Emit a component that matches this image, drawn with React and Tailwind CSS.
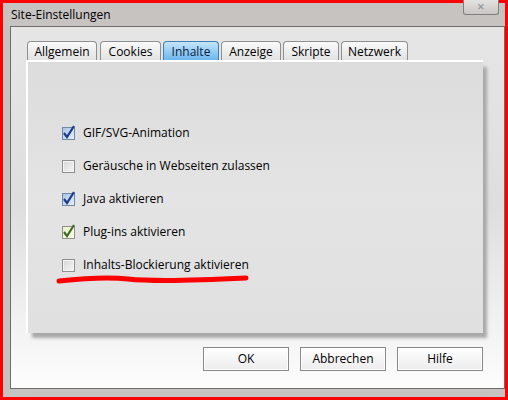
const tabs = [
    { name: "Allgemein", w: "w-[70px] mr-[1px]" },
    { name: "Cookies", w: "w-[61px]" },
    { name: "Inhalte", w: "w-[56px]" },
    { name: "Anzeige", w: "w-[60px]" },
    { name: "Skripte", w: "w-[56px]" },
    { name: "Netzwerk", w: "w-[67px]" },
];

const options = [
    { label: "GIF/SVG-Animation", state: "checked" },
    { label: "Geräusche in Webseiten zulassen", state: "off" },
    { label: "Java aktivieren", state: "checked" },
    { label: "Plug-ins aktivieren", state: "hover" },
    { label: "Inhalts-Blockierung aktivieren", state: "off" },
];

const CheckBox = ({ state }) => {
    if (state === "off") {
        return (
            <span className="w-[13px] h-[13px] border border-[#8f8f8f] bg-gradient-to-br from-[#d6d6d6] to-[#f7f7f7] shadow-[inset_0_0_0_1px_#f4f4f4]" />
        );
    }
    const green = state === "hover";
    return (
        <span
            className={
                green
                    ? "relative w-[13px] h-[13px] border border-[#8f8f8f] bg-gradient-to-br from-[#e8f1c8] to-[#fdfde8]"
                    : "relative w-[13px] h-[13px] border border-[#7088a8] bg-gradient-to-br from-[#a9c3e6] to-[#e8f0fb]"
            }
        >
            <svg width="14" height="14" viewBox="0 0 14 14" className="absolute left-[-1px] top-[-3px]">
                <path
                    d="M2 8 L5 12 L12 1"
                    fill="none"
                    stroke={green ? "#3f6b2a" : "#1b3c8c"}
                    strokeWidth="2.2"
                />
            </svg>
        </span>
    );
};

export default function App() {
    return (
        <div
            className="w-[508px] h-[400px] border-[3px] border-[#ff0000] bg-[#c7c3c0] flex flex-col"
            style={{ fontFamily: '"Open Sans", "Noto Sans", sans-serif' }}
        >
            {/* title bar */}
            <div className="relative h-[23px] flex items-center pl-[8px] text-[12px] text-black">
                Site-Einstellungen
                <div className="absolute right-[6px] top-[-3px] w-[36px] h-[15px] rounded-b-[3px] border border-t-0 border-[#7f7f7f] bg-gradient-to-b from-[#e4e2e0] to-[#c9c6c4] flex items-center justify-center text-[9px] text-[#9a9a9a] font-bold">
                    ✕
                </div>
            </div>

            {/* window body */}
            <div className="flex-1 flex pl-[7px] pb-[8px]">
                <div className="flex-1 border border-[#6d6d6d] bg-gradient-to-b from-[#e6e6e6] via-[#dedede] to-[#fdfdfd] flex flex-col pl-[15px] pr-[14px] pt-[14px]">
                    {/* tabs */}
                    <div className="flex gap-[2px] pl-[1px] h-[19px] items-end">
                        {tabs.map((t) =>
                            t.name === "Inhalte" ? (
                                <div
                                    key={t.name}
                                    className={`${t.w} h-[19px] rounded-t-[4px] border border-b-0 border-[#3c7fb1] bg-gradient-to-b from-[#c4e5fb] to-[#6cb6ef] text-[12px] text-[#0d2240] flex items-center justify-center pt-[1px]`}
                                >
                                    {t.name}
                                </div>
                            ) : (
                                <div
                                    key={t.name}
                                    className={`${t.w} h-[19px] rounded-t-[4px] border border-b-0 border-[#8e8f8f] bg-gradient-to-b from-[#fafafa] to-[#e2e2e2] text-[12px] text-black flex items-center justify-center pt-[1px]`}
                                >
                                    {t.name}
                                </div>
                            )
                        )}
                    </div>

                    {/* tab panel */}
                    <div className="relative h-[273px] w-[457px] border-l-2 border-t-2 border-white bg-gradient-to-b from-[#dcdcdc] via-[#e4e4e4] to-[#e0e0e0] shadow-[5px_6px_3px_-1px_#a9a9a9] flex flex-col gap-[17px] pl-[34px] pt-[63px]">
                        {options.map((o) => (
                            <div key={o.label} className="flex items-center gap-[8px] h-[16px] text-[12px] text-black">
                                <CheckBox state={o.state} />
                                <span>{o.label}</span>
                            </div>
                        ))}
                        <svg width="200" height="12" viewBox="0 0 200 12" className="absolute left-[28px] top-[212px]">
                            <path
                                d="M3 7 C30 4 55 3 72 5 C100 8 150 6 190 4"
                                fill="none"
                                stroke="#ff0000"
                                strokeWidth="5"
                                strokeLinecap="round"
                            />
                        </svg>
                    </div>

                    {/* buttons */}
                    <div className="flex justify-end gap-[11px] mt-[14px] w-[457px]">
                        {["OK", "Abbrechen", "Hilfe"].map((b) => (
                            <div
                                key={b}
                                className="w-[86px] h-[24px] border border-[#8a8a8a] bg-gradient-to-b from-[#ffffff] to-[#ececec] shadow-[inset_0_0_0_1px_#fdfdfd] flex items-center justify-center text-[12px] text-black"
                            >
                                {b}
                            </div>
                        ))}
                    </div>
                </div>
            </div>
        </div>
    );
}
